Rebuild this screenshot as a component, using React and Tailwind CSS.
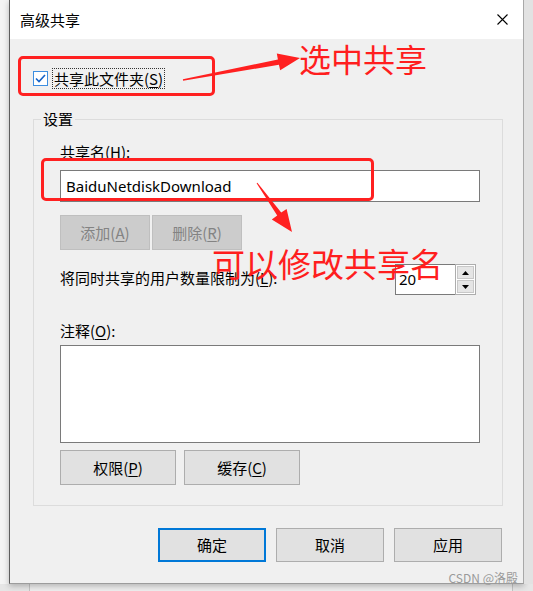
import React from 'react';

const CJK = "font-['Noto_Sans_CJK_SC','Noto_Sans',sans-serif]";

const Key = ({ k }) => (
  <span>
    (<span className="underline underline-offset-[2px]">{k}</span>)
  </span>
);

const Btn = ({ label, k, w, disabled, primary }) => {
  const base = 'h-full flex items-center justify-center text-[15px] leading-[20px]';
  let tone = 'bg-[#e1e1e1] border border-[#adadad] text-black';
  if (disabled) tone = 'bg-[#cccccc] border border-[#bfbfbf] text-[#838383]';
  if (primary) tone = 'bg-[#e1e1e1] border-2 border-[#0078d7] text-black';
  return (
    <div className={`${base} ${tone}`} style={{ width: w }}>
      {label}
      {k && <Key k={k} />}
    </div>
  );
};

const Arrows = () => (
  <svg className="absolute inset-0 pointer-events-none" width="533" height="591" viewBox="0 0 533 591">
    {/* 选中共享 arrow */}
    <polygon
      fill="#ff2020"
      points="182.9,79.3 277.9,59.4 276.8,53.5 300,58 280.2,70.2 278.9,64.8 183.1,80.7"
    />
    {/* 可以修改共享名 arrow */}
    <polygon
      fill="#ff2020"
      points="256.6,183.3 277.2,215.6 271.8,219.6 292,232 286.6,208.9 281.2,212.6 257.4,182.7"
    />
  </svg>
);

export default function App() {
  return (
    <div className={`relative w-[533px] h-[591px] overflow-hidden bg-[#e6e6e6] ${CJK} text-black`}>
      <div className="flex h-[584px]">
        <div className="w-[9px] bg-[#f4f4f4]" />

        {/* dialog window */}
        <div className="w-[515px] flex flex-col bg-[#f0f0f0] border-l border-r border-b border-l-[#5e5e5e] border-r-[#a8a8a8] border-b-[#9c9c9c] shadow-[0_2px_6px_rgba(0,0,0,0.25)]">
          {/* title bar */}
          <div className="h-[39px] shrink-0 bg-white flex items-center justify-between pl-[10px] pr-[15px]">
            <span className="text-[15px] leading-[20px]">高级共享</span>
            <svg width="11" height="11" viewBox="0 0 11 11">
              <path d="M0.5 0.5 L10.5 10.5 M10.5 0.5 L0.5 10.5" stroke="#000" strokeWidth="1.1" />
            </svg>
          </div>

          {/* body */}
          <div className="flex-1 flex flex-col">
            {/* share checkbox */}
            <div className="mt-[29px] ml-[23px] h-[21px] flex items-center gap-[4px]">
              <svg width="15" height="15" viewBox="0 0 15 15">
                <rect x="0.5" y="0.5" width="14" height="14" fill="#fff" stroke="#3d8ee0" />
                <path d="M3 7.5 L6 10.5 L12 4" fill="none" stroke="#1563c8" strokeWidth="1.6" />
              </svg>
              <div className="h-[21px] border border-dotted border-[#333] px-[1px] text-[15px] leading-[19px]">
                共享此文件夹<Key k="S" />
              </div>
            </div>

            {/* settings group */}
            <fieldset className="mt-[20px] ml-[23px] w-[470px] border border-[#dcdcdc] pl-[26px] pb-[20px]">
              <legend className="ml-[-19px] px-[2px] text-[15px] leading-[20px]">设置</legend>

              <div className="mt-[13px] text-[15px] leading-[20px]">
                共享名<Key k="H" />:
              </div>
              <div className="mt-[8px] w-[420px] h-[32px] bg-white border border-[#7a7a7a] flex items-center pl-[5px] font-['Noto_Sans',sans-serif] text-[15px]">
                BaiduNetdiskDownload
              </div>

              <div className="mt-[13px] h-[35px] flex gap-[2px]">
                <Btn label="添加" k="A" w={90} disabled />
                <Btn label="删除" k="R" w={90} disabled />
              </div>

              <div className="mt-[14px] w-[416px] h-[32px] flex justify-between">
                <div className="pt-[4px] text-[15px] leading-[20px]">
                  将同时共享的用户数量限制为<Key k="L" />:
                </div>
                <div className="flex h-[31px]">
                  <div className="w-[60px] h-full bg-white border border-r-0 border-[#7a7a7a] flex items-center pl-[3px] font-['Noto_Sans',sans-serif] text-[15px]">
                    20
                  </div>
                  <div className="w-[21px] h-full flex flex-col border border-[#adadad] bg-white p-[1px] gap-[1px]">
                    <div className="flex-1 bg-[#e5e5e5] border border-[#c8c8c8] flex items-center justify-center">
                      <svg width="7" height="4" viewBox="0 0 7 4"><polygon points="0,4 7,4 3.5,0" fill="#000" /></svg>
                    </div>
                    <div className="flex-1 bg-[#e5e5e5] border border-[#c8c8c8] flex items-center justify-center">
                      <svg width="7" height="4" viewBox="0 0 7 4"><polygon points="0,0 7,0 3.5,4" fill="#000" /></svg>
                    </div>
                  </div>
                </div>
              </div>

              <div className="mt-[25px] text-[15px] leading-[20px]">
                注释<Key k="O" />:
              </div>
              <div className="mt-[4px] w-[420px] h-[98px] bg-white border border-[#7a7a7a]" />

              <div className="mt-[7px] h-[35px] flex gap-[8px]">
                <Btn label="权限" k="P" w={116} />
                <Btn label="缓存" k="C" w={116} />
              </div>
            </fieldset>

            {/* dialog buttons */}
            <div className="mt-[22px] h-[34px] flex justify-end gap-[10px] pr-[21px]">
              <Btn label="确定" w={108} primary />
              <Btn label="取消" w={108} />
              <Btn label="应用" w={108} />
            </div>
          </div>
        </div>

        <div className="flex-1 bg-[#e2e2e2]" />
      </div>

      {/* window behind the dialog */}
      <div className="h-[7px] ml-[29px] w-[484px] border-l border-r border-[#c4c4c4] bg-[#eeeeee]" />

      {/* annotations */}
      <div className="absolute left-[18px] top-[56px] w-[197px] h-[40px] border-[3px] border-[#ff2020] rounded-[5px]" />
      <div className="absolute left-[41px] top-[158px] w-[333px] h-[43px] border-[3px] border-[#ff2020] rounded-[5px]" />
      <div className="absolute left-[299px] top-[40px] text-[32px] leading-[36px] text-[#ff1e1e]">选中共享</div>
      <div className="absolute left-[212px] top-[245px] text-[33px] leading-[36px] text-[#ff1e1e]">可以修改共享名</div>
      <Arrows />

      <div className="absolute right-[15px] top-[570px] text-[12px] leading-[15px] text-[#9a9a9a]">CSDN @洛殿</div>
    </div>
  );
}
